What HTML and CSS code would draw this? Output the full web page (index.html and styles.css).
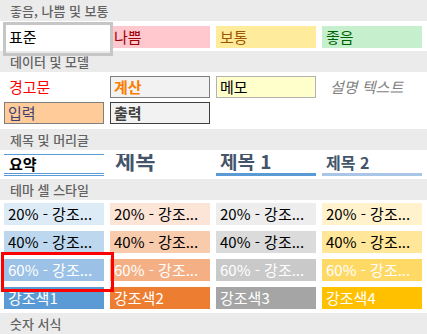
FILE: index.html
```html
<!DOCTYPE html>
<html lang="ko">
<head>
    <meta charset="UTF-8">
    <title>셀 스타일</title>
    <link rel="stylesheet" href="styles.css">
</head>
<body>
    <div class="gallery">
        <div class="group">
            <div class="group-title">좋음, 나쁨 및 보통</div>
            <div class="cells sec1">
                <div class="cell normal current">표준</div>
                <div class="cell bad">나쁨</div>
                <div class="cell neutral">보통</div>
                <div class="cell good">좋음</div>
            </div>
        </div>
        <div class="group">
            <div class="group-title">데이터 및 모델</div>
            <div class="cells sec2">
                <div class="cell warn">경고문</div>
                <div class="cell calc">계산</div>
                <div class="cell note">메모</div>
                <div class="cell explain">설명 텍스트</div>
                <div class="cell input">입력</div>
                <div class="cell output">출력</div>
            </div>
        </div>
        <div class="group">
            <div class="group-title">제목 및 머리글</div>
            <div class="cells sec3">
                <div class="cell total">요약</div>
                <div class="cell title">제목</div>
                <div class="cell head1">제목 1</div>
                <div class="cell head2">제목 2</div>
            </div>
        </div>
        <div class="group">
            <div class="group-title">테마 셀 스타일</div>
            <div class="cells sec4">
                <div class="cell a1-20">20% - 강조...</div>
                <div class="cell a2-20">20% - 강조...</div>
                <div class="cell a3-20">20% - 강조...</div>
                <div class="cell a4-20">20% - 강조...</div>
                <div class="cell a1-40">40% - 강조...</div>
                <div class="cell a2-40">40% - 강조...</div>
                <div class="cell a3-40">40% - 강조...</div>
                <div class="cell a4-40">40% - 강조...</div>
                <div class="cell a1-60 picked">60% - 강조...</div>
                <div class="cell a2-60">60% - 강조...</div>
                <div class="cell a3-60">60% - 강조...</div>
                <div class="cell a4-60">60% - 강조...</div>
                <div class="cell a1">강조색1</div>
                <div class="cell a2">강조색2</div>
                <div class="cell a3">강조색3</div>
                <div class="cell a4">강조색4</div>
            </div>
        </div>
        <div class="group">
            <div class="group-title">숫자 서식</div>
        </div>
    </div>
</body>
</html>
```

FILE: styles.css
```css
* { padding: 0; margin: 0; box-sizing: border-box; }

body { background: #ffffff; font-family: "Noto Sans CJK KR", "Noto Sans", sans-serif; }

.gallery { width: 427px; height: 334px; overflow: hidden; }

.group-title { height: 21px; line-height: 21px; padding-left: 10px; background: #ebebeb; color: #636363; font-size: 13px; font-weight: 500; }

.cells { display: grid; grid-template-columns: repeat(4, 100px); column-gap: 6px; row-gap: 4px; padding: 0 4px; }
.sec1 { padding-top: 5px; padding-bottom: 3px; }
.sec2 { padding-top: 4px; padding-bottom: 5px; }
.sec3 { padding-top: 4px; padding-bottom: 3px; }
.sec4 { padding-top: 3px; padding-bottom: 4px; row-gap: 6px; }

.cell { position: relative; height: 22px; line-height: 22px; padding-left: 4px; font-size: 15px; color: #000000; white-space: nowrap; overflow: hidden; }

.current { overflow: visible; }
.current::after { content: ""; position: absolute; z-index: 2; left: -1px; top: -4px; width: 104px; height: 28px; border: 3px solid #c6c6c6; }

.picked { overflow: visible; z-index: 2; }
.picked::after { content: ""; position: absolute; z-index: 2; left: -3px; top: -7px; width: 107px; height: 34px; border: 3px solid #ff0000; }

.normal { padding-left: 5px; }
.bad { background: #ffc7ce; color: #9c0006; }
.neutral { background: #ffeb9c; color: #9c5700; }
.good { background: #c6efce; color: #006100; }

.warn { color: #ff0000; padding-left: 5px; }
.calc { background: #f2f2f2; border: 1px solid #7f7f7f; color: #fa7d00; font-weight: bold; line-height: 20px; padding-left: 3px; }
.note { background: #ffffcc; border: 1px solid #b2b2b2; line-height: 20px; padding-left: 3px; }
.explain { color: #7f7f7f; font-style: italic; padding-left: 8px; }
.input { background: #ffcc99; border: 1px solid #7f7f7f; color: #3f3f76; line-height: 20px; padding-left: 3px; }
.output { background: #f2f2f2; border: 1px solid #3f3f3f; color: #3f3f3f; font-weight: bold; line-height: 20px; padding-left: 3px; }

.total { border-top: 1px solid #5b9bd5; border-bottom: 3px double #5b9bd5; font-weight: bold; line-height: 18px; padding-left: 5px; }
.title { font-size: 22px; line-height: 11px; padding-left: 5px; color: #44546a; font-weight: bold; }
.head1 { font-size: 19px; line-height: 13px; color: #44546a; font-weight: bold; border-bottom: 3px solid #5b9bd5; }
.head2 { font-size: 16px; line-height: 16px; color: #44546a; font-weight: bold; border-bottom: 3px solid #a9c5e8; }

.a1-20 { background: #ddebf7; }
.a2-20 { background: #fce4d6; }
.a3-20 { background: #ededed; }
.a4-20 { background: #fff2cc; }
.a1-40 { background: #bdd7ee; }
.a2-40 { background: #f8cbad; }
.a3-40 { background: #dbdbdb; }
.a4-40 { background: #ffe699; }
.a1-60 { background: #9bc2e6; color: #ffffff; }
.a2-60 { background: #f4b084; color: #ffffff; }
.a3-60 { background: #c9c9c9; color: #ffffff; }
.a4-60 { background: #ffd966; color: #ffffff; }
.a1 { background: #5b9bd5; color: #ffffff; }
.a2 { background: #ed7d31; color: #ffffff; }
.a3 { background: #a5a5a5; color: #ffffff; }
.a4 { background: #ffc000; color: #ffffff; }
```
